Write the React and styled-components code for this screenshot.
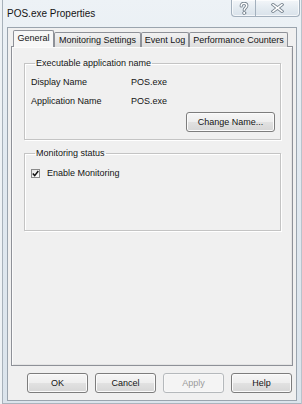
import React from 'react';
import styled, { createGlobalStyle } from 'styled-components';

const Global = createGlobalStyle`
  html, body { margin: 0; padding: 0; width: 302px; height: 404px; overflow: hidden; background: #dfe7ee; }
  * { box-sizing: border-box; }
  body { font-family: "Liberation Sans", Arial, sans-serif; color: #141414; }
`;

const Window = styled.div`
  width: 302px;
  height: 404px;
  display: flex;
  flex-direction: column;
  background: linear-gradient(180deg, #edf2f6 0%, #e1e9f0 40%, #dbe4ec 100%);
  box-shadow: inset 2px 0 0 #eef2f5, inset 3px 0 0 #a7b1ba, inset -1px 0 0 #b9c3cc, inset 0 -1px 0 #aab4bd;
`;

const TitleBar = styled.div`
  height: 27px;
  flex: none;
  display: flex;
  justify-content: space-between;
  align-items: flex-start;
`;

const Title = styled.div`
  padding: 8px 0 0 7px;
  font-size: 10px;
  line-height: 12px;
  color: #141414;
`;

const CaptionGroup = styled.div`
  display: flex;
  height: 17px;
  margin-right: 2px;
  border: 1px solid #a3b0bd;
  border-top: none;
  border-radius: 0 0 4px 4px;
  background: linear-gradient(180deg, #f3f6f9 0%, #e4ebf1 50%, #d9e2ea 100%);
  box-shadow: inset 0 0 0 1px rgba(255, 255, 255, 0.7);
  overflow: hidden;
`;

const CaptionButton = styled.div`
  width: ${(p) => p.w}px;
  display: flex;
  align-items: center;
  justify-content: center;
  & + & { border-left: 1px solid #a3b0bd; }
`;

const Client = styled.div`
  flex: 1;
  display: flex;
  flex-direction: column;
  margin: 0 5px 3px 7px;
  border: 1px solid #9aa4ae;
  background: #f0f0f0;
  padding: 2px 3px 0 3px;
`;

const TabStrip = styled.div`
  display: flex;
  align-items: flex-end;
  height: 17px;
  flex: none;
  padding-left: 2px;
  position: relative;
  z-index: 1;
`;

const Tab = styled.div`
  width: ${(p) => p.w}px;
  height: ${(p) => (p.active ? 17 : 15)}px;
  border: 1px solid #8e9198;
  border-bottom: none;
  border-radius: 2px 2px 0 0;
  background: ${(p) => (p.active ? '#f7f7f7' : 'linear-gradient(180deg, #f2f2f2 0%, #e8e8e8 50%, #dedede 100%)')};
  display: flex;
  align-items: center;
  justify-content: center;
  padding-bottom: ${(p) => (p.active ? 2 : 0)}px;
  font-size: 9px;
  line-height: 11px;
  white-space: nowrap;
  color: #141414;
`;

const Panel = styled.div`
  flex: 1;
  margin-top: -1px;
  border: 1px solid #8e9198;
  background: #f0f0f0;
  box-shadow: inset 1px 1px 0 #fbfbfb, inset -1px -1px 0 #e4e4e4;
  padding: 11px 11px 0 12px;
  display: flex;
  flex-direction: column;
  gap: 8px;
`;

const Group = styled.fieldset`
  margin: 0;
  border: 1px solid #c4c4c4;
  box-shadow: 1px 1px 0 #ffffff, inset 1px 1px 0 #ffffff;
  padding: ${(p) => p.pad};
  min-width: 0;
`;

const Legend = styled.legend`
  margin-left: 4px;
  padding: 0 1px;
  font-size: 9px;
  line-height: 11px;
  color: #141414;
`;

const InfoGrid = styled.div`
  display: grid;
  grid-template-columns: 100px 1fr;
  row-gap: 7px;
  font-size: 9px;
  line-height: 12px;
`;

const ButtonRow = styled.div`
  display: flex;
  justify-content: flex-end;
  margin-top: ${(p) => p.mt || 0}px;
`;

const Button = styled.button`
  width: ${(p) => p.w}px;
  height: 20px;
  padding: 0;
  border: 1px solid ${(p) => (p.disabled ? '#b5b9bc' : '#7d7d7d')};
  border-radius: 3px;
  background: ${(p) =>
    p.disabled
      ? '#f4f4f4'
      : 'linear-gradient(180deg, #f6f6f6 0%, #eeeeee 48%, #e1e1e1 52%, #d6d6d6 100%)'};
  box-shadow: inset 0 0 0 1px ${(p) => (p.disabled ? '#f8f8f8' : '#fbfbfb')};
  font-family: "Liberation Sans", Arial, sans-serif;
  font-size: 9px;
  color: ${(p) => (p.disabled ? '#9a9a9a' : '#141414')};
`;

const CheckRow = styled.label`
  display: flex;
  align-items: center;
  gap: 7px;
  font-size: 9px;
  line-height: 11px;
`;

const CheckBox = styled.span`
  width: 9px;
  height: 9px;
  border: 1px solid #8a8a8a;
  background: linear-gradient(135deg, #e4e4e4 0%, #ffffff 100%);
  display: flex;
  align-items: center;
  justify-content: center;
`;

const Footer = styled.div`
  flex: none;
  height: 34px;
  display: flex;
  align-items: center;
  justify-content: flex-end;
  gap: 7px;
  padding-right: 1px;
`;

const HelpGlyph = () => (
  <svg width="10" height="13" viewBox="0 0 10 13">
    <g fill="none" strokeLinecap="round" strokeLinejoin="round">
      <path d="M2.2 4 C2.2 2.2 3.5 1.4 5 1.4 C6.7 1.4 7.8 2.4 7.8 3.8 C7.8 5.6 5.2 5.8 5.2 8" stroke="#7b8792" strokeWidth="3.2" />
      <path d="M2.2 4 C2.2 2.2 3.5 1.4 5 1.4 C6.7 1.4 7.8 2.4 7.8 3.8 C7.8 5.6 5.2 5.8 5.2 8" stroke="#ffffff" strokeWidth="1.4" />
      <circle cx="5.2" cy="11" r="1.6" fill="#ffffff" stroke="#7b8792" strokeWidth="0.9" />
    </g>
  </svg>
);

const CloseGlyph = () => (
  <svg width="13" height="10" viewBox="0 0 13 10">
    <g fill="none" strokeLinecap="square">
      <path d="M2 1.6 L11 8.4 M11 1.6 L2 8.4" stroke="#7b8792" strokeWidth="3.2" />
      <path d="M2 1.6 L11 8.4 M11 1.6 L2 8.4" stroke="#ffffff" strokeWidth="1.4" />
    </g>
  </svg>
);

const Check = () => (
  <svg width="7" height="7" viewBox="0 0 7 7">
    <path d="M0.8 3.4 L2.7 5.6 L6.3 1" fill="none" stroke="#111" strokeWidth="1.5" />
  </svg>
);

export default function App() {
  return (
    <>
      <Global />
      <Window>
        <TitleBar>
          <Title>POS.exe Properties</Title>
          <CaptionGroup>
            <CaptionButton w={23}><HelpGlyph /></CaptionButton>
            <CaptionButton w={44}><CloseGlyph /></CaptionButton>
          </CaptionGroup>
        </TitleBar>
        <Client>
          <TabStrip>
            <Tab w={41} active>General</Tab>
            <Tab w={87}>Monitoring Settings</Tab>
            <Tab w={48}>Event Log</Tab>
            <Tab w={99}>Performance Counters</Tab>
          </TabStrip>
          <Panel>
            <Group pad="7px 5px 7px 6px">
              <Legend>Executable application name</Legend>
              <InfoGrid>
                <span>Display Name</span>
                <span>POS.exe</span>
                <span>Application Name</span>
                <span>POS.exe</span>
              </InfoGrid>
              <ButtonRow mt={5}>
                <Button w={89}>Change Name...</Button>
              </ButtonRow>
            </Group>
            <Group pad="9px 5px 51px 6px">
              <Legend>Monitoring status</Legend>
              <CheckRow>
                <CheckBox><Check /></CheckBox>
                Enable Monitoring
              </CheckRow>
            </Group>
          </Panel>
          <Footer>
            <Button w={61}>OK</Button>
            <Button w={61}>Cancel</Button>
            <Button w={61} disabled>Apply</Button>
            <Button w={61}>Help</Button>
          </Footer>
        </Client>
      </Window>
    </>
  );
}
